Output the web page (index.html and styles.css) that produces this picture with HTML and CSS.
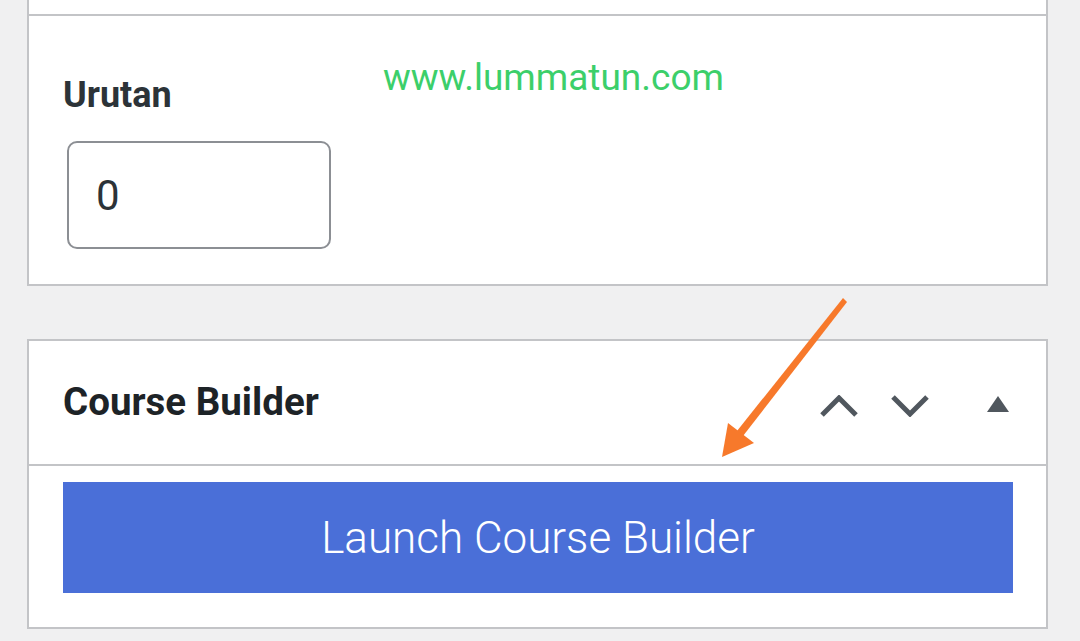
FILE: index.html
```html
<!DOCTYPE html>
<html lang="id">
<head>
  <meta charset="UTF-8">
  <meta name="viewport" content="width=device-width, initial-scale=1.0">
  <title>Course Builder</title>
  <link rel="stylesheet" href="styles.css">
</head>
<body>

  <div class="page">

    <div class="postbox postbox-top"></div>

    <div class="postbox postbox-order">
      <label class="field-label" for="menu_order">Urutan</label>
      <input class="field-input" type="text" id="menu_order" value="0">
      <span class="watermark">www.lummatun.com</span>
    </div>

    <div class="postbox postbox-builder">
      <div class="postbox-header">
        <h2>Course Builder</h2>
        <div class="handle-actions">
          <!-- naik -->
          <svg class="chevron" width="38" height="22" viewBox="0 0 38 22">
            <path d="M2 20 L19 3 L36 20" />
          </svg>
          <!-- turun -->
          <svg class="chevron" width="38" height="22" viewBox="0 0 38 22">
            <path d="M2 2 L19 19 L36 2" />
          </svg>
          <!-- tutup panel -->
          <svg class="toggle" width="22" height="16" viewBox="0 0 22 16">
            <polygon points="11,0 22,16 0,16" />
          </svg>
        </div>
      </div>
      <div class="inside">
        <button class="launch-btn">Launch Course Builder</button>
      </div>
    </div>

    <!-- panah penunjuk -->
    <svg class="pointer-arrow" width="1080" height="641" viewBox="0 0 1080 641">
      <polygon points="843,298 847,302 743,436 737,431" />
      <polygon points="722,457 728,423 754,443" />
    </svg>

  </div>

</body>
</html>
```

FILE: styles.css
```css
body {
  margin: 0;
  background-color: #f0f0f1;
  font-family: Roboto, "Liberation Sans", Arial, sans-serif;
  color: #2c3338;
  height: 641px;
  overflow: hidden;
}

.page {
  position: relative;
  padding-left: 27px;
  height: 641px;
}

.postbox {
  width: 1021px;
  box-sizing: border-box;
  background-color: #ffffff;
  border: 2px solid #c3c4c7;
}

.postbox-top {
  height: 16px;
  border-top: none;
}

.postbox-order {
  position: relative;
  border-top: none;
  padding: 58px 35px 35px 34px;
}

.field-label {
  display: block;
  font-size: 36px;
  font-weight: 700;
  color: #2c3338;
  margin-bottom: 25px;
}

.field-input {
  display: block;
  margin-left: 4px;
  width: 264px;
  height: 108px;
  box-sizing: border-box;
  padding: 0 27px;
  border: 2px solid #8c8f94;
  border-radius: 10px;
  font-family: Roboto, "Liberation Sans", Arial, sans-serif;
  font-size: 42px;
  color: #2c3338;
  background-color: #ffffff;
  outline: none;
}

/* tanda air di atas gambar */
.watermark {
  position: absolute;
  left: 354px;
  top: 40px;
  font-size: 37px;
  color: #3ccf6a;
}

.postbox-builder {
  margin-top: 53px;
}

.postbox-header {
  display: flex;
  align-items: center;
  justify-content: space-between;
  height: 123px;
  padding: 0 37px 0 34px;
  border-bottom: 2px solid #c3c4c7;
}

.postbox-header h2 {
  margin: -3px 0 0 0;
  font-size: 38.5px;
  font-weight: 700;
  color: #1d2327;
}

.handle-actions {
  display: flex;
  align-items: center;
  margin-top: 7px;
}

.chevron path {
  fill: none;
  stroke: #50575e;
  stroke-width: 5;
}

.chevron + .chevron {
  margin-left: 33px;
}

.toggle {
  margin-left: 58px;
  margin-top: -4px;
}

.toggle polygon {
  fill: #50575e;
}

.inside {
  padding: 16px 33px 34px 34px;
}

.launch-btn {
  display: block;
  width: 950px;
  height: 111px;
  border: none;
  border-radius: 0;
  background-color: #4a6fd8;
  color: #ffffff;
  font-family: Roboto, "Liberation Sans", Arial, sans-serif;
  font-size: 44px;
  font-weight: 300;
  cursor: pointer;
}

.pointer-arrow {
  position: absolute;
  left: 0;
  top: 0;
  pointer-events: none;
}

.pointer-arrow polygon {
  fill: #f7792b;
}
```
